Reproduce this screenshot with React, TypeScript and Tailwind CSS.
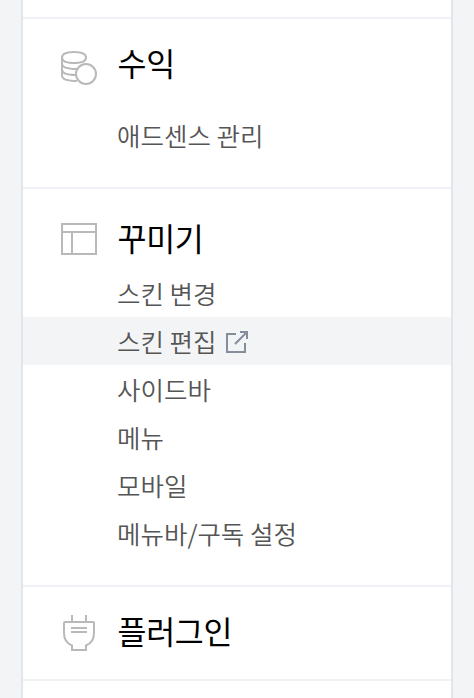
import type { ReactNode } from 'react'
import clsx from 'clsx'

function CoinsIcon() {
  return (
    <svg width="36" height="36" viewBox="0 0 36 36" fill="none" stroke="#b9b9b9" strokeWidth="2">
      <path d="M13 2C21 2 25 3.5 25 7.5S21 13 13 13S1 11.5 1 7.5S5 2 13 2Z" />
      <path d="M1 7.5V13.5C1 17 6 19 16 19" />
      <path d="M1 13V19.5C1 23 6 25 15 25" />
      <path d="M1 19V25.5C1 29 6 31 16 31" />
      <circle cx="25" cy="24" r="10" fill="#fff" />
    </svg>
  )
}

function LayoutIcon() {
  return (
    <svg width="36" height="36" viewBox="0 0 36 36" fill="none" stroke="#b9b9b9" strokeWidth="2">
      <path d="M1 3H35V33H1ZM1 11H35M11 11V33" />
    </svg>
  )
}

function PlugIcon() {
  return (
    <svg width="36" height="36" viewBox="0 0 36 36" fill="none" stroke="#b9b9b9" strokeWidth="2">
      <path d="M11 0V7M25 0V7M10 13H26M10 17H26" />
      <path d="M4 7H32Q33 7 33 8V18C33 24 30 28.5 25 30.5V35H11V30.5C6 28.5 3 24 3 18V8Q3 7 4 7Z" />
    </svg>
  )
}

function NewWindowIcon() {
  return (
    <svg className="mt-0.5 ml-[9px]" width="22" height="22" viewBox="0 0 22 22" fill="none" stroke="#858c9c" strokeWidth="2">
      <path d="M10 3H1V21H19V12" />
      <path d="M14 1H21V8M21 1L9 13" />
    </svg>
  )
}

type SectionProps = {
  title: string
  icon: ReactNode
  className?: string
  titleClassName?: string
  children?: ReactNode
}

function Section({ title, icon, className, titleClassName = 'pb-1', children }: SectionProps) {
  return (
    <section className={clsx('border-b-2 border-[#f0f1f6]', className)}>
      <h2 className="flex h-12 items-center gap-[20.5px] pl-[38px] text-[31.5px] tracking-[-0.3px] text-black">
        {icon}
        <span className={clsx('leading-10', titleClassName)}>{title}</span>
      </h2>
      {children}
    </section>
  )
}

function MenuItem({ label, active }: { label: string; active?: boolean }) {
  return (
    <li className={clsx('flex h-12 items-center pl-[94px] text-[25.5px] font-[350] leading-12 text-[#555]', active && 'bg-[#f3f4f6]')}>
      <span>{label}</span>
      {active && <NewWindowIcon />}
    </li>
  )
}

const skinMenus = ['스킨 변경', '스킨 편집', '사이드바', '메뉴', '모바일', '메뉴바/구독 설정']

export default function App() {
  return (
    <div className="h-[698px] overflow-hidden bg-[#f3f4f6] pl-[21px] font-['Noto_Sans_CJK_KR',sans-serif]">
      <nav className="h-full w-[432px] border-x-2 border-[#e0e5ee] bg-white">
        <div className="h-[19px] border-b-2 border-[#f0f1f6]" />
        <Section title="수익" icon={<CoinsIcon />} className="h-[170px] pt-[25px]" titleClassName="pb-3">
          <ul className="pt-[19px]">
            <MenuItem label="애드센스 관리" />
          </ul>
        </Section>
        <Section title="꾸미기" icon={<LayoutIcon />} className="h-[398px] pt-[26px]">
          <ul className="pt-1.5">
            {skinMenus.map((label) => (
              <MenuItem key={label} label={label} active={label === '스킨 편집'} />
            ))}
          </ul>
        </Section>
        <Section title="플러그인" icon={<PlugIcon />} className="h-[94px] pt-[22px]" titleClassName="pb-1.5" />
      </nav>
    </div>
  )
}
